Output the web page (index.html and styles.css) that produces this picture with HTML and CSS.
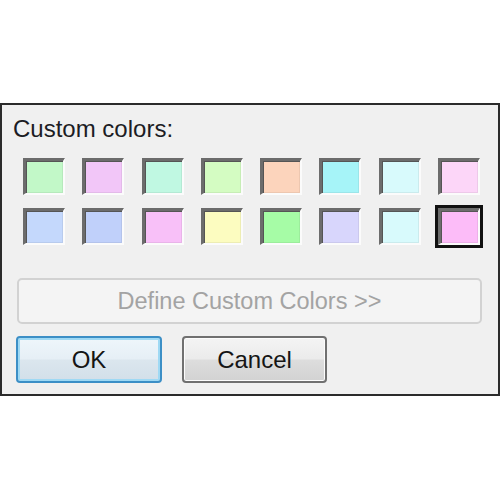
FILE: index.html
```html
<!DOCTYPE html>
<html lang="en">
<head>
    <meta charset="UTF-8">
    <title>Color</title>
    <link rel="stylesheet" href="styles.css">
</head>
<body>
    <div class="dialog">
        <div class="label">Custom colors:</div>

        <div class="swatches">
            <span class="swatch" style="background:#c2f8c8"></span>
            <span class="swatch" style="background:#f2c6f8"></span>
            <span class="swatch" style="background:#c0f8e2"></span>
            <span class="swatch" style="background:#d4fcc2"></span>
            <span class="swatch" style="background:#fcd4bc"></span>
            <span class="swatch" style="background:#a6f4f8"></span>
            <span class="swatch" style="background:#d8fafc"></span>
            <span class="swatch" style="background:#fcd6f8"></span>

            <span class="swatch" style="background:#c4d8fc"></span>
            <span class="swatch" style="background:#c0d0fa"></span>
            <span class="swatch" style="background:#f8c0f8"></span>
            <span class="swatch" style="background:#fcfcc0"></span>
            <span class="swatch" style="background:#a6fca6"></span>
            <span class="swatch" style="background:#d8d6fc"></span>
            <span class="swatch" style="background:#d8fafc"></span>
            <span class="swatch selected" style="background:#fcbcf8"></span>
        </div>

        <button class="define-button" disabled>Define Custom Colors &gt;&gt;</button>

        <div class="button-row">
            <button class="button default">OK</button>
            <button class="button">Cancel</button>
        </div>
    </div>
</body>
</html>
```

FILE: styles.css
```css
body {
    margin: 0;
    padding: 0;
    background: #ffffff;
    font-family: 'Liberation Sans', Arial, sans-serif;
}

.dialog {
    box-sizing: border-box;
    margin-top: 103px;
    width: 500px;
    height: 293px;
    border: 2px solid #2b2b2b;
    background: #f0f0f0;
    padding: 11px 0 0 11px;
    display: flex;
    flex-direction: column;
}

.label {
    font-size: 24px;
    line-height: 26px;
    color: #1c1c24;
}

/* custom colour wells */
.swatches {
    display: grid;
    grid-template-columns: repeat(8, 42px);
    grid-auto-rows: 37px;
    column-gap: 17.3px;
    row-gap: 13px;
    margin: 16px 0 0 10px;
}

.swatch {
    box-sizing: border-box;
    border-style: solid;
    border-width: 3px 2px 2px 3px;
    border-color: #6c6c6c #fbfbfb #fbfbfb #6c6c6c;
    box-shadow: inset 1px 1px 0 #555555, inset -1px -1px 0 rgba(0, 0, 0, 0.06);
}

.swatch.selected {
    outline: 3px solid #111111;
    outline-offset: 0;
}

.define-button {
    box-sizing: border-box;
    width: 465px;
    height: 46px;
    margin: 33px 0 0 4px;
    border: 2px solid #d2d2d2;
    border-radius: 5px;
    background: #f4f4f4;
    color: #a3a3a3;
    font-family: inherit;
    font-size: 23.5px;
    padding: 0;
}

.button-row {
    display: flex;
    gap: 20px;
    margin: 12px 0 0 3px;
}

.button {
    box-sizing: border-box;
    width: 145px;
    height: 47px;
    padding: 0;
    border: 2px solid #707070;
    border-radius: 4px;
    background: linear-gradient(to bottom, #f4f4f4 0%, #ebebeb 48%, #dddddd 52%, #d2d2d2 100%);
    box-shadow: inset 0 0 0 1px #fcfcfc;
    color: #151515;
    font-family: inherit;
    font-size: 24px;
}

.button.default {
    width: 146px;
    border-color: #3c8fc6;
    background: linear-gradient(to bottom, #eef6fb 0%, #e6eff6 48%, #dbe6ee 52%, #d2dfe9 100%);
    box-shadow: inset 0 0 0 2px #9fd9f4;
}
```
